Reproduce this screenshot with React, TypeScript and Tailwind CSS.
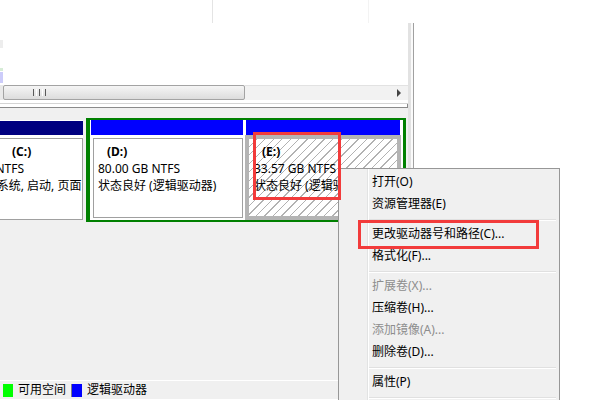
import React from "react";

type MenuEntry = { label?: string; disabled?: boolean; sep?: boolean };

const MENU: MenuEntry[] = [
  { label: "打开(O)" },
  { label: "资源管理器(E)" },
  { sep: true },
  { label: "更改驱动器号和路径(C)..." },
  { label: "格式化(F)..." },
  { sep: true },
  { label: "扩展卷(X)...", disabled: true },
  { label: "压缩卷(H)..." },
  { label: "添加镜像(A)...", disabled: true },
  { label: "删除卷(D)..." },
  { sep: true },
  { label: "属性(P)" },
  { sep: true },
];

const HATCH =
  "bg-[repeating-linear-gradient(135deg,#ffffff_0px,#ffffff_5px,#b2b2b2_5px,#b2b2b2_6px)]";

function ContextMenu() {
  return (
    <div className="absolute left-[338px] top-[168px] w-[222px] h-[250px] border border-[#979797] bg-[#f0f0f0] p-[2px]">
      {/* icon gutter */}
      <div className="absolute top-0 bottom-0 left-[28px] w-[1px] bg-[#e2e3e3]" />
      <div className="absolute top-0 bottom-0 left-[29px] w-[1px] bg-white" />
      {MENU.map((m, i) =>
        m.sep ? (
          <div key={i} className="h-[8px] pt-[4px] ml-[28px] mr-[1px]">
            <div className="h-[1px] bg-[#e0e0e0]" />
            <div className="h-[1px] bg-white" />
          </div>
        ) : (
          <div
            key={i}
            className={`h-[22px] leading-[22px] pl-[31px] whitespace-nowrap ${
              m.disabled ? "text-[#8d8d8d]" : "text-black"
            }`}
          >
            {m.label}
          </div>
        )
      )}
    </div>
  );
}

export default function App() {
  return (
    <div className="relative w-[600px] h-[400px] overflow-hidden bg-white text-[12px] text-black font-['Noto_Sans','Noto_Sans_CJK_SC',sans-serif]">
      {/* top strip (list header remnants) */}
      <div className="h-[23px] flex">
        <div className="w-[212px]" />
        <div className="w-[156px] border-l border-[#e4e4e4]" />
        <div className="flex-1 border-l border-[#f3f3f3]" />
      </div>

      <div className="flex h-[377px]">
        {/* main pane */}
        <div className="w-[408px] flex flex-col">
          {/* volume list area */}
          <div className="h-[62px] flex">
            <div className="w-[3px] flex flex-col">
              <div className="h-[17px]" />
              <div className="h-[8px] bg-[#ededed]" />
              <div className="h-[20px]" />
              <div className="h-[3px] bg-[#d6ecd6]" />
              <div className="h-[1px]" />
              <div className="h-[11px] bg-[#ccccfa]" />
            </div>
            <div className="flex-1 bg-white" />
          </div>

          {/* horizontal scrollbar */}
          <div className="h-[15px] flex bg-[#f0f0f0]">
            <div className="w-[3px] bg-[#e9e9e9]" />
            <div className="w-[242px] h-full border border-[#a3a3a3] rounded-[2px] bg-[linear-gradient(#f5f5f5,#dcdcdc)] flex items-center pl-[29px] gap-[2px]">
              <div className="w-[1px] h-[7px] bg-[#5a5a5a]" />
              <div className="w-[1px] h-[7px] bg-white" />
              <div className="w-[1px] h-[7px] bg-[#5a5a5a]" />
              <div className="w-[1px] h-[7px] bg-white" />
              <div className="w-[1px] h-[7px] bg-[#5a5a5a]" />
            </div>
            <div className="flex-1 bg-[#f2f2f2] border-t border-[#e2e2e2] flex items-center justify-end pr-[7px]">
              <div className="w-0 h-0 border-y-[4px] border-y-transparent border-l-[4px] border-l-[#444444]" />
            </div>
          </div>

          {/* splitter */}
          <div className="h-[8px] flex flex-col">
            <div className="h-[3px] bg-white" />
            <div className="h-[1px] bg-[#d4d4d4]" />
            <div className="h-[3px] bg-white border-r border-[#8a8a8a]" />
            <div className="h-[1px] bg-[#8a8a8a]" />
          </div>

          {/* disk graphic area */}
          <div className="flex-1 bg-[#f0f0f0] pt-[10px]">
            <div className="flex h-[104px]">
              {/* C: */}
              <div className="w-[83px] mt-[2px] h-[100px] bg-white flex flex-col">
                <div className="mt-[1px] h-[14px] bg-[#000080]" />
                <div className="mt-[3px] flex-1 border-y border-r border-[#a0a0a0] overflow-hidden pt-[4px] leading-[17px] whitespace-nowrap">
                  <div className="pl-[12px] font-bold">(C:)</div>
                  <div className="ml-[-58px]">59.90 GB NTFS</div>
                  <div className="ml-[-58px]">状态良好 (系统, 启动, 页面</div>
                </div>
              </div>

              {/* extended partition */}
              <div className="ml-[3px] w-[320px] h-[104px] border-t-2 border-l-4 border-r-[3px] border-b-2 border-[#008000] bg-white flex">
                {/* D: */}
                <div className="w-[154px] px-[1px] flex flex-col">
                  <div className="h-[15px] bg-[#0000ff]" />
                  <div className="mt-[3px] ml-[2px] h-[80px] border border-[#a0a0a0] bg-white pt-[4px] pl-[4px] leading-[17px] whitespace-nowrap overflow-hidden">
                    <div className="pl-[9px] font-bold">(D:)</div>
                    <div>80.00 GB NTFS</div>
                    <div>状态良好 (逻辑驱动器)</div>
                  </div>
                </div>
                {/* E: (selected) */}
                <div className="ml-[1px] w-[156px] flex flex-col">
                  <div className="mx-[1px] h-[15px] bg-[#0000ff]" />
                  <div className={`flex-1 border-4 border-[#b4b4b4] ${HATCH} pt-[4px] pl-[5px] leading-[17px] whitespace-nowrap overflow-hidden`}>
                    <div className="pl-[8px] font-bold">(E:)</div>
                    <div>33.57 GB NTFS</div>
                    <div>状态良好 (逻辑驱动器)</div>
                  </div>
                </div>
              </div>
            </div>
          </div>

          {/* legend */}
          <div className="h-[20px] border-t border-white border-b border-[#a0a0a0] bg-[#f0f0f0] flex items-center pl-[3px] leading-[18px]">
            <div className="w-[10px] h-[13px] bg-[#00ff00]" />
            <span className="ml-[5px]">可用空间</span>
            <div className="ml-[5px] w-[11px] h-[13px] border-l border-[#808080] bg-[#0000ff]" />
            <span className="ml-[5px]">逻辑驱动器</span>
          </div>
        </div>

        {/* window edge */}
        <div className="w-[6px] flex">
          <div className="w-[3px] bg-[#e2e2e2]" />
          <div className="w-[2px] bg-[#fafafa]" />
          <div className="w-[1px] bg-[#a0a0a0]" />
        </div>
        <div className="flex-1 bg-white" />
      </div>

      <ContextMenu />

      {/* red highlight boxes */}
      <div className="absolute left-[253px] top-[132px] w-[88px] h-[68px] border-[3px] border-[#f23b3b]" />
      <div className="absolute left-[358px] top-[220px] w-[181px] h-[29px] border-[3px] border-[#f23b3b]" />
    </div>
  );
}
